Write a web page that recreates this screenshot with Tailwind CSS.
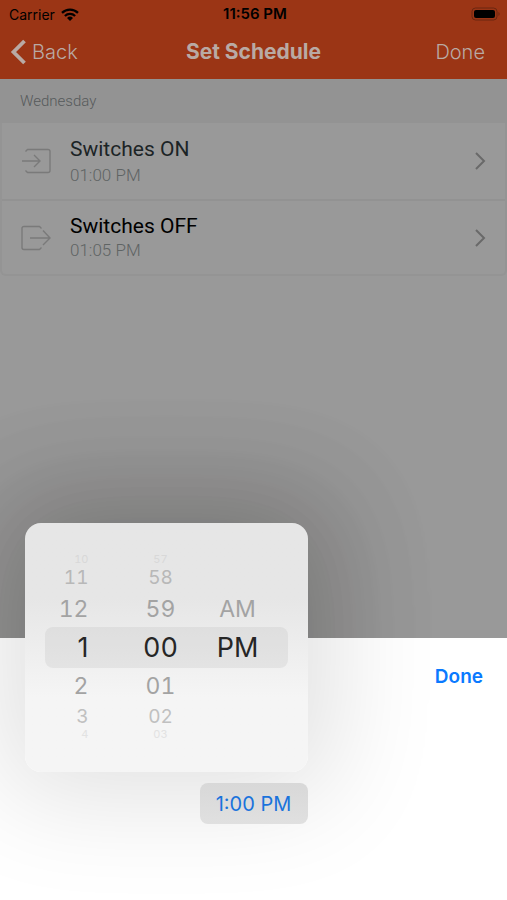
<!DOCTYPE html>
<html lang="en">
<head>
<meta charset="utf-8">
<meta name="viewport" content="width=device-width, initial-scale=1">
<title>Set Schedule</title>
<script src="https://cdn.jsdelivr.net/npm/@tailwindcss/browser@4"></script>
</head>
<body class="min-h-screen flex flex-col bg-[#999999] font-['Inter',sans-serif]">
  <header class="bg-[#9b3515]">
    <div class="grid grid-cols-3 items-center h-7 pl-[9px] pr-[6px] text-[14px] text-black">
      <div class="flex items-center gap-[6px]">
        <span>Carrier</span>
        <svg class="w-[18px] h-[13px]" viewBox="0 0 18 13" fill="none" stroke="#000" stroke-width="2.3" aria-label="Wi-Fi">
          <path d="M1 4.9a11.4 11.4 0 0 1 16 0"/>
          <path d="M3.9 8a7.3 7.3 0 0 1 10.2 0"/>
          <path d="M9 13 6 10a4.3 4.3 0 0 1 6 0z" fill="#000" stroke="none"/>
        </svg>
      </div>
      <span class="text-center text-[15px] font-semibold">11:56 PM</span>
      <svg class="justify-self-end w-[30px] h-[14px]" viewBox="0 0 30 14" aria-label="Battery">
        <rect x="1" y="1" width="25" height="12" rx="3.5" fill="none" stroke="#6a2610"/>
        <rect x="3" y="3" width="21" height="8" rx="2" fill="#000"/>
        <path d="M27.5 5v4a2.4 2.4 0 0 0 0-4z" fill="#6a2610"/>
      </svg>
    </div>
    <nav class="grid grid-cols-3 items-center h-[51px] pb-1 px-[10px] text-[20px] text-[#b9aaa4]">
      <a href="#" class="flex items-center gap-[6px] font-light">
        <svg class="w-4 h-[26px]" viewBox="0 0 16 26" fill="none" stroke="currentColor" stroke-width="3.8" aria-hidden="true"><path d="M14.500 2 3.500 13l11 11"/></svg>
        Back
      </a>
      <h1 class="text-center text-[21px] font-bold whitespace-nowrap">Set Schedule</h1>
      <button type="button" class="justify-self-end pr-3 font-light">Done</button>
    </nav>
  </header>

  <main class="relative flex-1 overflow-hidden">
    <h2 class="h-11 px-5 pt-3 bg-[#939393] text-[15px] leading-5 font-light text-[#565a5b] font-['Roboto',sans-serif]">Wednesday</h2>
    <ul class="border-x-2 border-b-2 border-[#949494] rounded-b-md divide-y-2 divide-[#929292] font-['Roboto',sans-serif]">
      <li>
        <a href="#" class="flex items-center h-[76px] pl-5 pr-[17px] gap-5">
          <svg class="w-7 h-7 overflow-visible" viewBox="0 0 28 28" fill="none" stroke="#7a7a7a" stroke-width="1.4" aria-hidden="true">
            <path d="M3.500 4.500 5.500 2.500H26q2 0 2 2v19q0 2-2 2H5.500l-2-2"/><path d="M0 14h18M12 8l6 6-6 6"/>
          </svg>
          <span class="flex-1">
            <span class="block text-[21px] leading-7 text-[#1c2426]">Switches ON</span>
            <span class="block text-[17px] leading-6 font-light text-[#5f6464]">01:00 PM</span>
          </span>
          <svg class="w-4 h-5" viewBox="0 0 16 20" fill="none" stroke="#696969" stroke-width="2" aria-hidden="true"><path d="m4 2 8 8-8 8"/></svg>
        </a>
      </li>
      <li>
        <a href="#" class="flex items-center h-[73px] pl-5 pr-[17px] gap-5">
          <svg class="w-7 h-7 overflow-visible" viewBox="0 0 28 28" fill="none" stroke="#7a7a7a" stroke-width="1.4" aria-hidden="true">
            <path d="m19.500 4.500-2-2H2q-2 0-2 2v19q0 2 2 2h15.500l2-2"/><path d="M8 14h20M21 6.500l7 7.500-7 7"/>
          </svg>
          <span class="flex-1">
            <span class="block text-[21px] leading-6 text-black">Switches OFF</span>
            <span class="block text-[17px] leading-6 font-light text-[#5f6464]">01:05 PM</span>
          </span>
          <svg class="w-4 h-5" viewBox="0 0 16 20" fill="none" stroke="#696969" stroke-width="2" aria-hidden="true"><path d="m4 2 8 8-8 8"/></svg>
        </a>
      </li>
    </ul>
    <!-- Extra shade cast by the time popover on the dimmed list -->
    <div class="absolute inset-x-0 bottom-0 flex justify-center" aria-hidden="true">
      <div class="relative w-[108px]">
        <div class="absolute right-0 top-[-115px] w-[283px] h-[249px] rounded-2xl shadow-[0_0_110px_25px_rgba(20,16,0,0.13)]"></div>
      </div>
    </div>
  </main>

  <section class="relative bg-white pt-[26px] pb-[76px]" aria-label="Time">
    <div class="flex justify-end pr-6">
      <button type="button" class="text-[19px] leading-[26px] font-semibold text-[#0a7aff]">Done</button>
    </div>
    <div class="flex justify-center pt-[93px]">
      <div class="relative w-[108px]">
        <button type="button" class="relative z-10 w-full h-[41px] rounded-lg bg-linear-to-b from-[#d8d8d8] to-[#e0e0e0] text-[20px] text-[#1a73dc]">1:00 PM</button>
        <div class="absolute right-0 bottom-full mb-[11px] w-[283px] h-[249px] rounded-2xl bg-linear-to-b from-[#e6e6e6] from-30% to-[#f5f5f5] to-70% shadow-[0_0_110px_25px_rgba(0,0,0,0.12)] px-5 pt-8">
          <div class="relative grid grid-cols-[44px_90px_1fr] tabular-nums text-[#a3a3a3] before:absolute before:inset-x-0 before:top-[72px] before:h-[41px] before:rounded-lg before:bg-black/5">
            <div role="listbox" aria-label="Hour" class="relative flex flex-col text-right">
              <span role="option" class="h-2 text-[11px] leading-2 text-[#d8d8d8]">10</span>
              <span role="option" class="h-[26px] text-[19px] leading-[30px] text-[#b8b8b8]">11</span>
              <span role="option" class="h-[38px] text-[23px] leading-10">12</span>
              <span role="option" aria-selected="true" class="h-[41px] text-[27px] leading-[41px] proportional-nums text-[#262626]">1</span>
              <span role="option" class="h-[36px] text-[23px] leading-9">2</span>
              <span role="option" class="h-[26px] text-[19px] leading-[26px] text-[#c0c0c0]">3</span>
              <span role="option" class="h-2 text-[11px] leading-2 text-[#e2e2e2]">4</span>
            </div>
            <div role="listbox" aria-label="Minute" class="relative flex flex-col items-end text-center">
              <span role="option" class="w-[36px] h-2 text-[11px] leading-2 text-[#d8d8d8]">57</span>
              <span role="option" class="w-[36px] h-[26px] text-[19px] leading-[30px] text-[#b8b8b8]">58</span>
              <span role="option" class="w-[36px] h-[38px] text-[23px] leading-10">59</span>
              <span role="option" aria-selected="true" class="w-[36px] h-[41px] text-[27px] leading-[41px] text-[#262626]">00</span>
              <span role="option" class="w-[36px] h-[36px] text-[23px] leading-9">01</span>
              <span role="option" class="w-[36px] h-[26px] text-[19px] leading-[26px] text-[#c0c0c0]">02</span>
              <span role="option" class="w-[36px] h-2 text-[11px] leading-2 text-[#e2e2e2]">03</span>
            </div>
            <div role="listbox" aria-label="AM or PM" class="relative flex flex-col pt-[34px] pl-[36px]">
              <span role="option" class="w-[46px] text-center h-[38px] text-[23px] leading-10">AM</span>
              <span role="option" aria-selected="true" class="w-[46px] text-center h-[41px] text-[27px] leading-[41px] text-[#262626]">PM</span>
            </div>
          </div>
        </div>
      </div>
    </div>
  </section>
</body>
</html>
